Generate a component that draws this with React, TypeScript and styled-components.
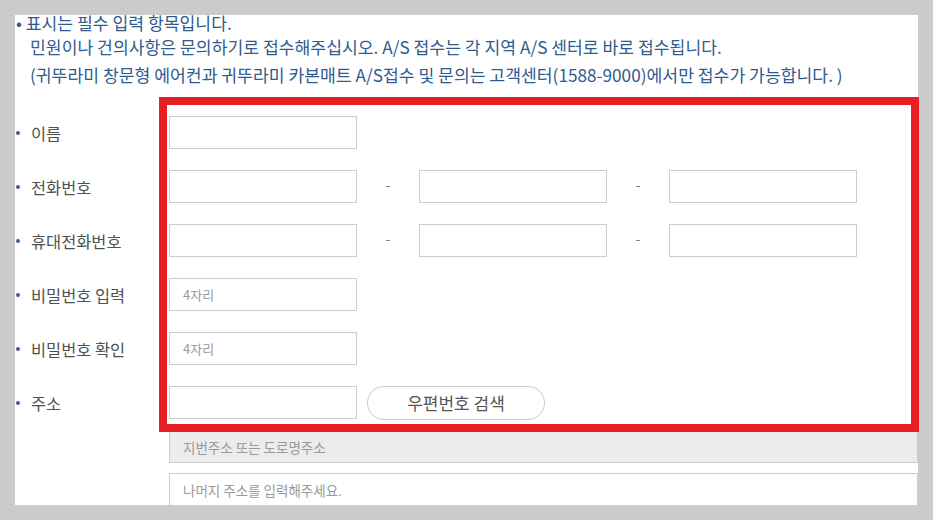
import React from "react";
import styled, { createGlobalStyle } from "styled-components";

const GlobalStyle = createGlobalStyle`
  html, body {
    margin: 0;
    padding: 0;
    background: #cbcbcb;
  }
  * {
    box-sizing: border-box;
  }
`;

const Page = styled.div`
  position: relative;
  width: 933px;
  height: 520px;
  padding: 15px 0 0 15px;
  overflow: hidden;
  font-family: "Noto Sans CJK KR", "Noto Sans", sans-serif;
`;

const Panel = styled.div`
  width: 903px;
  height: 490px;
  background: #fff;
  overflow: hidden;
`;

const Notice = styled.div`
  margin-top: -2px;
  padding-left: 1px;
  color: #2f5b8e;
  font-size: 17.2px;
`;

const NoticeLine = styled.p<{ $indent?: boolean }>`
  margin: 0;
  padding-left: ${(p) => (p.$indent ? "14px" : "0")};
  line-height: ${(p) => (p.$indent ? "27.5px" : "20px")};
  white-space: nowrap;
`;

const Form = styled.div`
  margin-top: 28px;
  display: flex;
  flex-direction: column;
`;

const Row = styled.div<{ $gap?: number }>`
  display: flex;
  align-items: center;
  height: 33px;
  margin-bottom: ${(p) => p.$gap ?? 21}px;
`;

const Label = styled.div`
  width: 154px;
  flex: none;
  padding-left: 1px;
  display: flex;
  align-items: center;
  color: #505050;
  font-size: 16.4px;
  white-space: nowrap;
`;

const Dot = styled.span`
  display: inline-block;
  width: 4px;
  height: 4px;
  border-radius: 50%;
  background: #3b5f8e;
  margin-right: 11px;
`;

const TextInput = styled.input`
  width: 188px;
  height: 33px;
  flex: none;
  border: 1px solid #cdcdcd;
  padding: 0 13px;
  font-family: inherit;
  font-size: 13px;
  color: #444;
  background: #fff;
  outline: none;

  &::placeholder {
    color: #9a9a9a;
  }
`;

const Dash = styled.span`
  width: 62px;
  flex: none;
  text-align: center;
  color: #7a7a7a;
  font-size: 14px;
  margin-top: -6px;
`;

const SearchButton = styled.button`
  width: 178px;
  height: 34px;
  margin-left: 10px;
  border: 1px solid #cacaca;
  border-radius: 17px;
  background: #fff;
  color: #555;
  font-family: inherit;
  font-size: 17px;
  cursor: pointer;
`;

const WideInput = styled.input<{ $muted?: boolean }>`
  display: block;
  width: 749px;
  height: 33px;
  margin-left: 154px;
  margin-bottom: 10px;
  border: 1px solid #cdcdcd;
  padding: 0 13px;
  font-family: inherit;
  font-size: 13.5px;
  background: ${(p) => (p.$muted ? "#ececec" : "#fff")};
  outline: none;

  &::placeholder {
    color: #9a9a9a;
  }
`;

const Highlight = styled.div`
  position: absolute;
  left: 159px;
  top: 97px;
  width: 760px;
  height: 335px;
  border: 8px solid #e61e26;
  pointer-events: none;
`;

const Field: React.FC<{ label: string; gap?: number; children: React.ReactNode }> = ({
  label,
  gap,
  children,
}) => (
  <Row $gap={gap}>
    <Label>
      <Dot />
      {label}
    </Label>
    {children}
  </Row>
);

export default function App() {
  return (
    <>
      <GlobalStyle />
      <Page>
        <Panel>
          <Notice>
            <NoticeLine>• 표시는 필수 입력 항목입니다.</NoticeLine>
            <NoticeLine $indent>
              민원이나 건의사항은 문의하기로 접수해주십시오. A/S 접수는 각 지역 A/S 센터로 바로 접수됩니다.
            </NoticeLine>
            <NoticeLine $indent>
              (귀뚜라미 창문형 에어컨과 귀뚜라미 카본매트 A/S접수 및 문의는 고객센터(1588-9000)에서만 접수가 가능합니다. )
            </NoticeLine>
          </Notice>

          <Form>
            <Field label="이름">
              <TextInput />
            </Field>
            <Field label="전화번호">
              <TextInput />
              <Dash>-</Dash>
              <TextInput />
              <Dash>-</Dash>
              <TextInput />
            </Field>
            <Field label="휴대전화번호">
              <TextInput />
              <Dash>-</Dash>
              <TextInput />
              <Dash>-</Dash>
              <TextInput />
            </Field>
            <Field label="비밀번호 입력">
              <TextInput type="password" placeholder="4자리" />
            </Field>
            <Field label="비밀번호 확인">
              <TextInput type="password" placeholder="4자리" />
            </Field>
            <Field label="주소" gap={11}>
              <TextInput />
              <SearchButton>우편번호 검색</SearchButton>
            </Field>
            <WideInput $muted readOnly placeholder="지번주소 또는 도로명주소" />
            <WideInput placeholder="나머지 주소를 입력해주세요." />
          </Form>
        </Panel>
        <Highlight />
      </Page>
    </>
  );
}
